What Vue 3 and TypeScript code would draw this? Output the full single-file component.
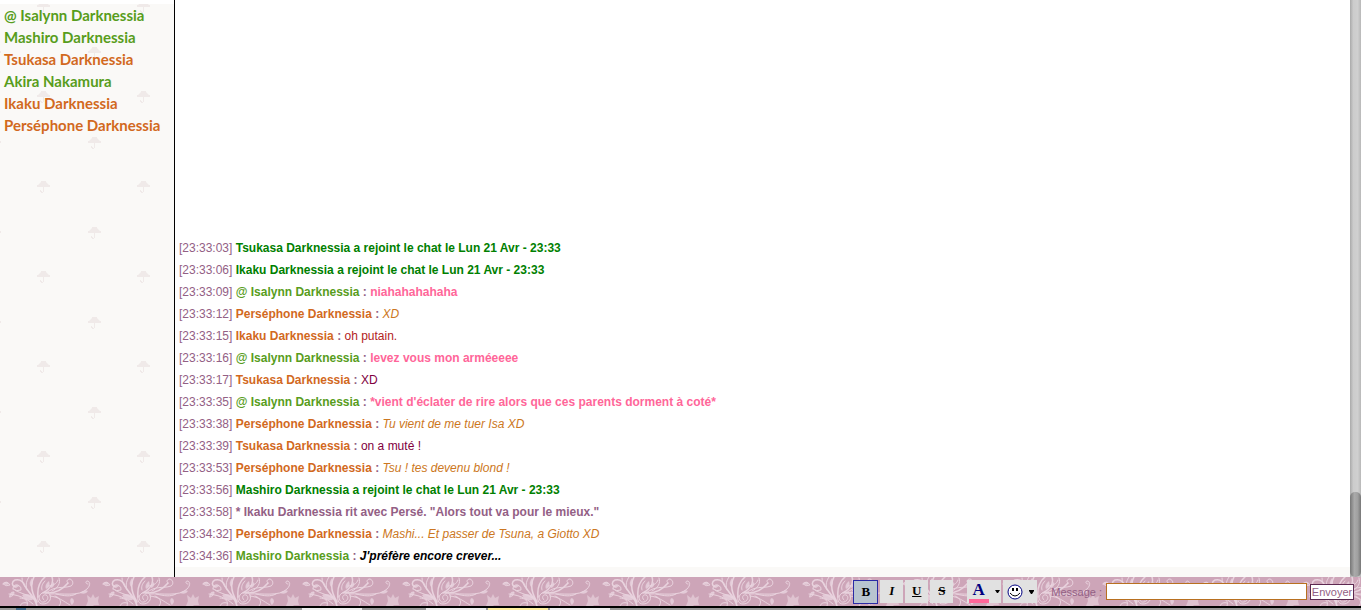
<script setup lang="ts">
import { ref } from 'vue'

type Member = { name: string; tone: string }
type Line = { time: string; author?: string; tone?: string; text: string; look: string }

const members: Member[] = [
  { name: '@ Isalynn Darknessia', tone: 'green' },
  { name: 'Mashiro Darknessia', tone: 'green' },
  { name: 'Tsukasa Darknessia', tone: 'orange' },
  { name: 'Akira Nakamura', tone: 'green' },
  { name: 'Ikaku Darknessia', tone: 'orange' },
  { name: 'Perséphone Darknessia', tone: 'orange' },
]

const lines: Line[] = [
  { time: '23:33:03', text: 'Tsukasa Darknessia a rejoint le chat le Lun 21 Avr - 23:33', look: 'join' },
  { time: '23:33:06', text: 'Ikaku Darknessia a rejoint le chat le Lun 21 Avr - 23:33', look: 'join' },
  { time: '23:33:09', author: '@ Isalynn Darknessia', tone: 'green', text: 'niahahahahaha', look: 'pink' },
  { time: '23:33:12', author: 'Perséphone Darknessia', tone: 'orange', text: 'XD', look: 'amber' },
  { time: '23:33:15', author: 'Ikaku Darknessia', tone: 'orange', text: 'oh putain.', look: 'red' },
  { time: '23:33:16', author: '@ Isalynn Darknessia', tone: 'green', text: 'levez vous mon arméeeee', look: 'pink' },
  { time: '23:33:17', author: 'Tsukasa Darknessia', tone: 'orange', text: 'XD', look: 'plum' },
  { time: '23:33:35', author: '@ Isalynn Darknessia', tone: 'green', text: "*vient d'éclater de rire alors que ces parents dorment à coté*", look: 'pink' },
  { time: '23:33:38', author: 'Perséphone Darknessia', tone: 'orange', text: 'Tu vient de me tuer Isa XD', look: 'amber' },
  { time: '23:33:39', author: 'Tsukasa Darknessia', tone: 'orange', text: 'on a muté !', look: 'plum' },
  { time: '23:33:53', author: 'Perséphone Darknessia', tone: 'orange', text: 'Tsu ! tes devenu blond !', look: 'amber' },
  { time: '23:33:56', text: 'Mashiro Darknessia a rejoint le chat le Lun 21 Avr - 23:33', look: 'join' },
  { time: '23:33:58', text: '* Ikaku Darknessia rit avec Persé. "Alors tout va pour le mieux."', look: 'action' },
  { time: '23:34:32', author: 'Perséphone Darknessia', tone: 'orange', text: 'Mashi... Et passer de Tsuna, a Giotto XD', look: 'amber' },
  { time: '23:34:36', author: 'Mashiro Darknessia', tone: 'green', text: "J'préfère encore crever...", look: 'black' },
]

const message = ref('')
const bold = ref(true)
</script>

<template>
  <div class="page">
    <div class="main">
      <aside class="members">
        <svg class="pattern" aria-hidden="true">
          <defs>
            <pattern id="umbrellas" width="100" height="90" patternUnits="userSpaceOnUse">
              <g id="umbrella" fill="#f0eae9">
                <path d="M37 7V5h1l3-3V1h5v1l3 3h1v2z" />
                <path d="M43 7h1v5h-1v1h-2v-1h-1v-2h1v1h1v1h1z" />
              </g>
              <use href="#umbrella" x="51" y="46" />
              <use href="#umbrella" x="-49" y="46" />
            </pattern>
          </defs>
          <rect width="100%" height="100%" fill="url(#umbrellas)" />
          <rect width="100%" height="4" fill="#fff" />
        </svg>
        <ul class="names">
          <li v-for="m in members" :key="m.name"><a href="#" :class="m.tone">{{ m.name }}</a></li>
        </ul>
      </aside>
      <main class="chat">
        <div class="log">
          <p v-for="l in lines" :key="l.time">
            <span class="time">[{{ l.time }}]</span>{{ ' ' }}<template v-if="l.author"><b><a href="#" :class="l.tone">{{ l.author }}</a> :</b>{{ ' ' }}</template><span :class="l.look">{{ l.text }}</span>
          </p>
        </div>
      </main>
      <div class="scroll"><div class="thumb"></div></div>
    </div>

    <form class="bar" @submit.prevent>
      <svg class="pattern" aria-hidden="true">
        <defs>
          <pattern id="flowers" width="100" height="60" patternUnits="userSpaceOnUse">
            <g fill="none" stroke="#e9d3de" stroke-linecap="round">
              <path stroke-width="1.5" d="M37 29C35 20 28 15 25 9C23 4 19 2 15 3C11 5 12 9 15 10M37 25C31 15 30 7 34 0M38 20C37 11 39 5 45 0M43 16C50 12 54 6 52 0M45 16C56 17 63 12 68 6" />
              <path stroke-width="1" d="M33 21C27 12 22 8 22 1M35 23C28 17 21 17 15 13M27 13C25 7 27 3 29 0M46 16C56 8 62 12 71 9C74 7 73 3 70 2C67 2 66 5 68 6M50 17C62 16 79 20 87 12C91 8 90 4 87 4C85 5 86 7 88 7M50 19C59 20 63 24 70 28M56 17C65 19 70 20 76 17M27 29C29 24 25 21 20 21M20 29C21 26 24 25 27 26M52 14C58 11 61 6 59 1M33 27C25 20 17 18 9 17M45 4C42 7 41 10 42 13M48 9C52 9 57 7 58 3M55 19C61 21 62 26 59 29" />
              <path stroke-width="1" d="M44 23c-3-2-1-6 2-5s2 6-2 7-6-4-4-7 8-5 10 0-2 9-7 9-6-5-5-8" />
              <path stroke-width="1" d="M13 12q0-5 5-4q4 2 3 5q-5 2-8-1M3 7q4-4 7 1q-4 2-7-1M10 18q1-4 4-3q0 4-4 5z" />
            </g>
            <g fill="#e9d3de">
              <path d="M3 6q4-3 6 1l-3 1zM10 19q1-4 4-4q-1 4-4 4M14 9q3-2 5 0l-3 2zM22 18q6-3 13 3l-3 2q-7 1-10-5M49 4q-5 4-3 8q5-2 3-8M80 16q4-4 8-2q-2 4-8 2M71 27q-2-5 1-6q4 3 0 7zM32 1q-4 5-1 9q3-4 1-9M54 5q-4 3-3 6q4-1 3-6" opacity=".8" />
              <path d="M87 18l4 3 2-4 2 4 4-2-1 5 1 4h-5l-2 2-6-1 2-5z" opacity=".65" />
            </g>
          </pattern>
        </defs>
        <rect width="100%" height="100%" fill="url(#flowers)" />
      </svg>
      <div class="group">
        <button type="button" class="tool" :class="{ on: bold }" aria-label="Gras" @click="bold = !bold"><b>B</b></button>
        <button type="button" class="tool" aria-label="Italique"><i>I</i></button>
        <button type="button" class="tool" aria-label="Souligné"><u>U</u></button>
        <button type="button" class="tool" aria-label="Barré"><s>S</s></button>
      </div>
      <div class="group">
        <button type="button" class="tool color" aria-label="Couleur">
          <span class="letter">A</span>
          <svg width="5" height="3" viewBox="0 0 5 3"><path d="M0 0h5L3 3H2z" /></svg>
        </button>
        <button type="button" class="tool smiley" aria-label="Smileys">
          <svg width="16" height="16" viewBox="0 0 16 16">
            <circle cx="8" cy="8" r="7" fill="#fff" stroke="#000080" />
            <path d="M5 4h2v3H5zM9 4h2v3H9z" />
            <path d="M3 9q5 6 10 0" fill="none" stroke="#000" />
          </svg>
          <svg width="5" height="4" viewBox="0 0 5 4"><path d="M0 0h5v1L3 4H2L0 1z" /></svg>
        </button>
      </div>
      <label for="message">Message :</label>
      <input id="message" v-model="message" type="text" autocomplete="off" />
      <button type="submit" class="send">Envoyer</button>
    </form>
    <div class="taskbar" aria-hidden="true">
      <span class="orb"></span><span class="tab first"></span><span class="tab gray"></span><span class="tab"></span><span class="tab yellow"></span><span class="tab"></span>
    </div>
  </div>
</template>

<style>
html,
body,
#app {
  height: 100%;
}
body {
  margin: 0;
  overflow: hidden;
}
</style>

<style scoped>
.page {
  display: flex;
  flex-direction: column;
  height: 100%;
  background: #faf9f7;
  color: #936085;
  font-family: "Liberation Sans", Arial, sans-serif;
  font-size: 12px;
}
a {
  text-decoration: none;
}
.green {
  color: #589d1c;
}
.orange {
  color: #d2691e;
}
.main {
  flex: 1;
  min-height: 0;
  display: flex;
}
.pattern {
  position: absolute;
  inset: 0;
  width: 100%;
  height: 100%;
}
.members {
  position: relative;
  flex: 0 0 174px;
  border-right: 1px solid #000;
}
.names {
  position: relative;
  list-style: none;
  margin: 0;
  padding: 4px;
  font: 700 15px/22px Lato, sans-serif;
  white-space: nowrap;
}
.chat {
  flex: 1;
  display: flex;
  flex-direction: column;
  padding-bottom: 10px;
}
.log {
  flex: 1;
  display: flex;
  flex-direction: column;
  justify-content: flex-end;
  background: #fff;
  padding: 0 4px;
}
.log p {
  margin: 0;
  line-height: 22px;
}
.join {
  color: #008000;
  font-weight: bold;
}
.pink {
  color: #ff6699;
  font-weight: bold;
}
.amber {
  color: #cc7722;
  font-style: italic;
}
.red {
  color: #b22222;
}
.plum {
  color: #800040;
}
.action {
  font-weight: bold;
}
.black {
  color: #000;
  font-weight: bold;
  font-style: italic;
}
.scroll {
  width: 11px;
  display: flex;
  flex-direction: column;
  justify-content: flex-end;
  background: linear-gradient(90deg, #aaa, #ccc 30%, #d0d0d0 70%, #b8b8b8);
}
.thumb {
  height: 85px;
  border-radius: 5px;
  background: linear-gradient(90deg, #777, #aaa 40%, #a0a0a0 70%, #777);
}
.bar {
  position: relative;
  display: flex;
  align-items: center;
  justify-content: flex-end;
  height: 29px;
  padding-right: 7px;
  background: #cda5b8;
}
.bar > :not(.pattern) {
  position: relative;
}
.group {
  display: flex;
  gap: 2px;
  margin-right: 14px;
}
.tool {
  box-sizing: border-box;
  width: 23px;
  height: 23px;
  padding: 0;
  border: 0;
  background: #e1e1e1;
  color: #000;
  font: bold 13px/22px "Liberation Serif", "Times New Roman", serif;
}
.tool.on {
  width: 25px;
  height: 24px;
  border: 1px solid #2a2aa5;
  background: #b8c4d0;
}
.color,
.smiley {
  width: 34px;
  display: flex;
  align-items: center;
  justify-content: center;
  gap: 6px;
}
.letter {
  color: #000080;
  border-bottom: 4px solid #ff6699;
  padding: 0 4px;
  font-size: 17px;
  line-height: 18px;
}
label {
  margin-right: 4px;
  font-size: 11px;
}
#message {
  box-sizing: border-box;
  width: 201px;
  height: 17px;
  margin-right: 3px;
  padding: 0 2px;
  border: 1px solid #b87020;
  outline: 0;
  background: #fff;
  font: inherit;
}
.send {
  box-sizing: border-box;
  width: 44px;
  height: 16px;
  padding: 0;
  overflow: hidden;
  border: 1px solid #5c2850;
  background: #fff;
  color: #936085;
  font: 11px/14px "Liberation Sans", Arial, sans-serif;
}
.taskbar {
  display: flex;
  height: 2px;
  border-top: 2px solid #000;
  background: #999;
}
.orb {
  width: 10px;
  margin-left: 16px;
  background: #446a88;
}
.tab {
  width: 60px;
  margin-right: 2px;
  background: #eee;
}
.first {
  margin-left: 276px;
}
.gray {
  background: #999;
}
.yellow {
  background: #ffefa0;
}
</style>
